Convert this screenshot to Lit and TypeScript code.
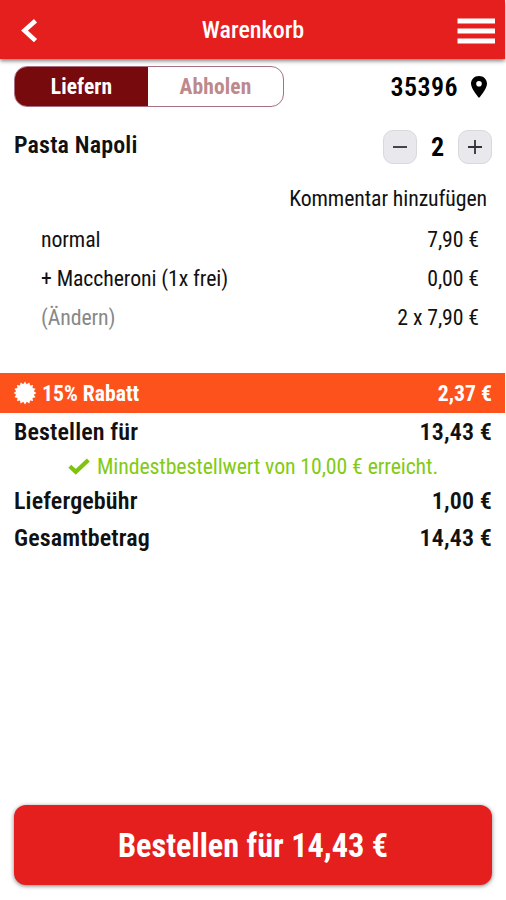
import { LitElement, html, css, svg } from "lit";
import { customElement, property } from "lit/decorators.js";

const sealPoints = Array.from({ length: 32 }, (_, i) => {
  const r = i % 2 ? 9 : 11.4;
  const a = (i * Math.PI) / 16;
  return `${(12 + r * Math.sin(a)).toFixed(2)},${(12 - r * Math.cos(a)).toFixed(2)}`;
}).join(" ");

/* Price line with a label on the left and an amount on the right. */
@customElement("sum-row")
export class SumRow extends LitElement {
  @property() label = "";
  @property() amount = "";

  static styles = css`
    :host {
      display: flex;
      justify-content: space-between;
      align-items: center;
      white-space: nowrap;
    }
  `;

  render() {
    return html`<span>${this.label}</span><span>${this.amount}</span>`;
  }
}

@customElement("app-root")
export class AppRoot extends LitElement {
  static styles = css`
    :host {
      display: flex;
      flex-direction: column;
      box-sizing: border-box;
      width: 506px;
      height: 900px;
      overflow: hidden;
      background: #fff;
      color: #111;
      font-family: "Roboto Condensed", Roboto, sans-serif;
      font-stretch: 75%;
      white-space: nowrap;
    }
    * { box-sizing: border-box; }
    svg { display: block; flex: none; }
    header {
      display: grid;
      grid-template-columns: 60px 1fr 60px;
      align-items: center;
      height: 59px;
      width: 505px;
      background: #e51e1e;
      color: #fff;
      box-shadow: 0 2px 4px rgba(0, 0, 0, 0.5);
      flex: none;
      padding-top: 2px;
    }
    .title { text-align: center; font-size: 24px; font-weight: 500; margin-top: -1px; padding-left: 1px; }
    .back { margin-left: 20px; }
    .mode {
      display: flex;
      justify-content: space-between;
      align-items: center;
      padding: 0 18px 0 14px;
      height: 41px;
      margin-top: 7px;
    }
    .switch {
      display: grid;
      grid-template-columns: 133px 1fr;
      width: 270px;
      height: 41px;
      border: 1px solid #a87080;
      border-radius: 13px;
      overflow: hidden;
      font-size: 21.5px;
      font-weight: 700;
      line-height: 40px;
      text-align: center;
      letter-spacing: 0.1px;
    }
    .on { background: #770a0c; color: #fff; }
    .off { color: #bd898c; }
    .zip { display: flex; align-items: center; gap: 12px; font-size: 26px; font-weight: 600; letter-spacing: 0.4px; color: #000; }
    .item {
      display: flex;
      justify-content: space-between;
      align-items: center;
      height: 36px;
      margin: 22px 14px 0;
      font-size: 24px;
      font-weight: 600;
      letter-spacing: 0.15px;
    }
    .name { margin-top: -4px; }
    .stepper { display: flex; align-items: center; }
    .count { width: 41px; text-align: center; font-size: 26px; font-weight: 700; letter-spacing: 0; color: #000; }
    .step {
      display: grid;
      place-items: center;
      width: 34px;
      height: 34px;
      border: 1px solid #d9d9dd;
      border-radius: 10px;
      background: #e9e9ed;
    }
    .details { font-size: 21.8px; letter-spacing: -0.1px; }
    .note { height: 40px; line-height: 40px; margin-top: 14px; padding-right: 19px; text-align: right; }
    .details sum-row { height: 39px; margin: 0 27px 0 41px; }
    .line { display: flex; justify-content: space-between; align-items: center; height: 39px; margin: 0 27px 0 41px; }
    .muted { color: #888; }
    .details sum-row, .line { padding-top: 1px; }
    .discount {
      display: flex;
      align-items: center;
      width: 505px;
      height: 40px;
      margin-top: 37px;
      padding: 0 13px 0 13px;
      background: #fd521c;
      color: #fff;
      font-size: 21.7px;
      font-weight: 700;
      flex: none;
    }
    .discount sum-row { flex: 1; margin-left: 5px; }
    .total { height: 37px; margin: 0 14px; font-size: 24px; font-weight: 600; letter-spacing: 0.13px; flex: none; }
    .minimum {
      display: flex;
      align-items: center;
      justify-content: center;
      gap: 7px;
      height: 32px;
      color: #82cb14;
      font-size: 21.8px;
      letter-spacing: -0.1px;
    }
    .order {
      display: grid;
      place-items: center;
      width: 478px;
      height: 80px;
      margin: auto 0 15px 14px;
      padding: 2px 0 0;
      border: 0;
      border-radius: 12px;
      background: #e51e1e;
      color: #fff;
      font: inherit;
      font-size: 32.3px;
      font-weight: 700;
      box-shadow: 0 1px 4px rgba(0, 0, 0, 0.5);
    }
  `;

  render() {
    return html`
      <header>
        <svg class="back" width="20" height="28" viewBox="0 0 20 28">
          <path d="M15.500 3.700 4.500 13.500 15.500 23.600" fill="none" stroke="#fff" stroke-width="4.600" />
        </svg>
        <span class="title">Warenkorb</span>
        <svg width="50" height="28" viewBox="0 0 50 28">
          <path d="M12.500 4h37.500M12.500 14h37.500M12.500 24h37.500" stroke="#fff" stroke-width="5" />
        </svg>
      </header>
      <div class="mode">
        <div class="switch"><span class="on">Liefern</span><span class="off">Abholen</span></div>
        <div class="zip">
          <span>35396</span>
          <svg width="18" height="22" viewBox="0 0 18 22">
            <path fill="#000" fill-rule="evenodd" d="M9 0C4.300 0 1 3.400 1 7.800 1 13 9 22 9 22s8-9 8-14.200C17 3.400 13.700 0 9 0Zm0 5a2.800 2.800 0 1 1 0 5.600A2.800 2.800 0 0 1 9 5Z" />
          </svg>
        </div>
      </div>
      <div class="item">
        <span class="name">Pasta Napoli</span>
        <div class="stepper">
          <span class="step"><svg width="16" height="16" viewBox="0 0 16 16"><path d="M1 8h14" stroke="#333" stroke-width="1.800" /></svg></span>
          <span class="count">2</span>
          <span class="step"><svg width="16" height="16" viewBox="0 0 16 16"><path d="M1 8h14M8 1v14" stroke="#333" stroke-width="1.800" /></svg></span>
        </div>
      </div>
      <div class="details">
        <div class="note">Kommentar hinzufügen</div>
        <sum-row label="normal" amount="7,90 €"></sum-row>
        <sum-row label="+ Maccheroni (1x frei)" amount="0,00 €"></sum-row>
        <div class="line"><span class="muted">(Ändern)</span><span>2 x 7,90 €</span></div>
      </div>
      <div class="discount">
        <svg width="24" height="24" viewBox="0 0 24 24">${svg`<polygon fill="#fff" points=${sealPoints} />`}</svg>
        <sum-row label="15% Rabatt" amount="2,37 €"></sum-row>
      </div>
      <sum-row class="total" label="Bestellen für" amount="13,43 €"></sum-row>
      <div class="minimum">
        <svg width="22" height="17" viewBox="0 0 22 17"><path d="M1.800 8.200 7.800 13.800 20.300 2" fill="none" stroke="#7ec30c" stroke-width="4.200" /></svg>
        <span>Mindestbestellwert von 10,00 € erreicht.</span>
      </div>
      <sum-row class="total" label="Liefergebühr" amount="1,00 €"></sum-row>
      <sum-row class="total" label="Gesamtbetrag" amount="14,43 €"></sum-row>
      <button class="order">Bestellen für 14,43 €</button>
    `;
  }
}
